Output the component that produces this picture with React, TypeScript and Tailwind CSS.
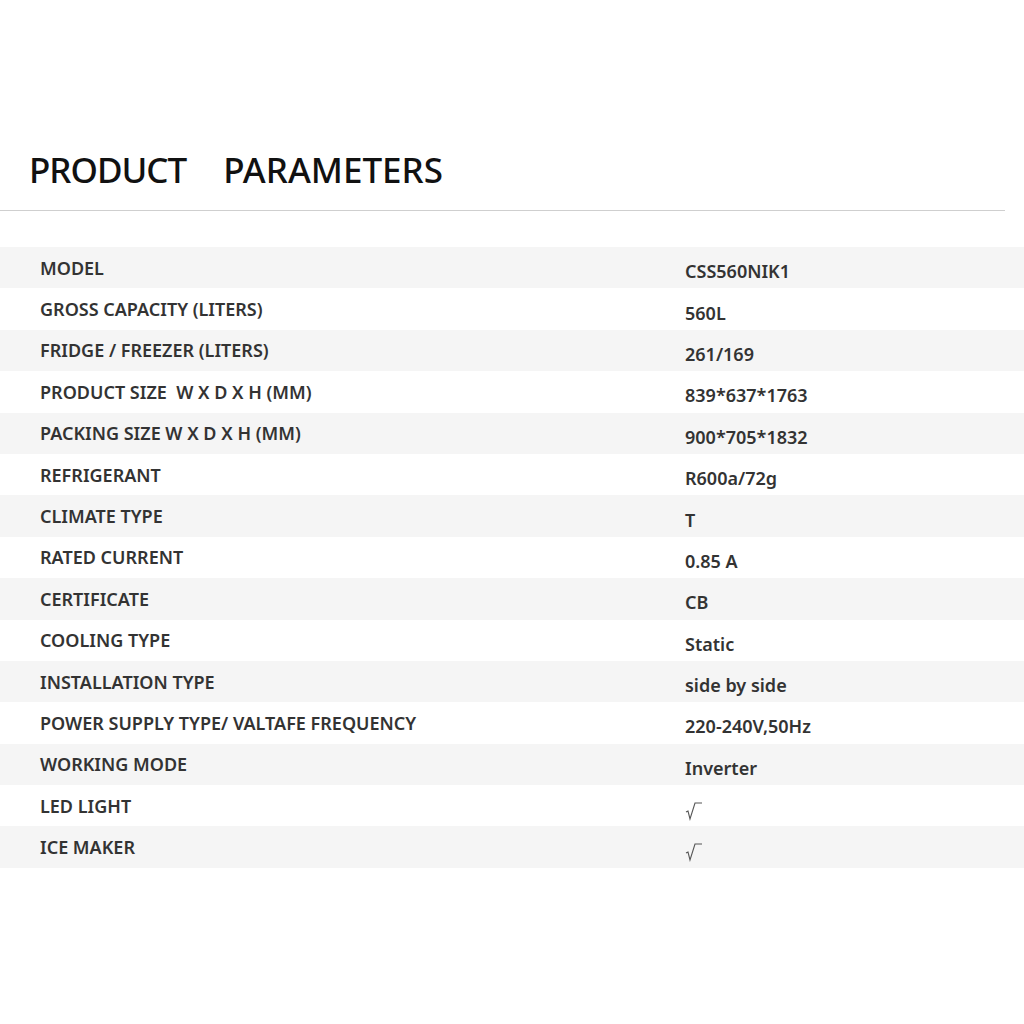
import React from 'react';

const ROWS: [string, string][] = [
  ['MODEL', 'CSS560NIK1'],
  ['GROSS CAPACITY (LITERS)', '560L'],
  ['FRIDGE / FREEZER (LITERS)', '261/169'],
  ['PRODUCT SIZE  W X D X H (MM)', '839*637*1763'],
  ['PACKING SIZE W X D X H (MM)', '900*705*1832'],
  ['REFRIGERANT', 'R600a/72g'],
  ['CLIMATE TYPE', 'T'],
  ['RATED CURRENT', '0.85 A'],
  ['CERTIFICATE', 'CB'],
  ['COOLING TYPE', 'Static'],
  ['INSTALLATION TYPE', 'side by side'],
  ['POWER SUPPLY TYPE/ VALTAFE FREQUENCY', '220-240V,50Hz'],
  ['WORKING MODE', 'Inverter'],
  ['LED LIGHT', '√'],
  ['ICE MAKER', '√'],
];

const Radical = () => (
  <svg width="18" height="20" viewBox="0 0 18 20" className="block mt-[2px]">
    <path d="M1 11 L3 10 L5 18 L10 2 L17 2" fill="none" stroke="#555" strokeWidth="1.1" />
  </svg>
);

export default function App() {
  return (
    <div className="w-[1024px] h-[1024px] bg-white font-['Noto_Sans',sans-serif]">
      <div className="pt-[146px] pl-[29px] flex gap-[37px] text-[35px] font-medium leading-[48px] text-[#111]">
        <span className="tracking-[-1px]">PRODUCT</span>
        <span className="tracking-[0px]">PARAMETERS</span>
      </div>
      <div className="mt-[16px] w-[1005px] h-[1px] bg-[#cfcfcf]" />
      <div className="mt-[36px]">
        {ROWS.map(([label, value], i) => (
          <div
            key={label}
            className={`flex items-center h-[41.4px] text-[18px] font-semibold text-[#333] ${i % 2 === 0 ? 'bg-[#f5f5f5]' : 'bg-white'}`}
          >
            <div className="w-[685px] pl-[40px] pt-[1px] whitespace-pre">{label}</div>
            <div className="pt-[8px]">{value === '√' ? <Radical /> : value}</div>
          </div>
        ))}
      </div>
    </div>
  );
}
